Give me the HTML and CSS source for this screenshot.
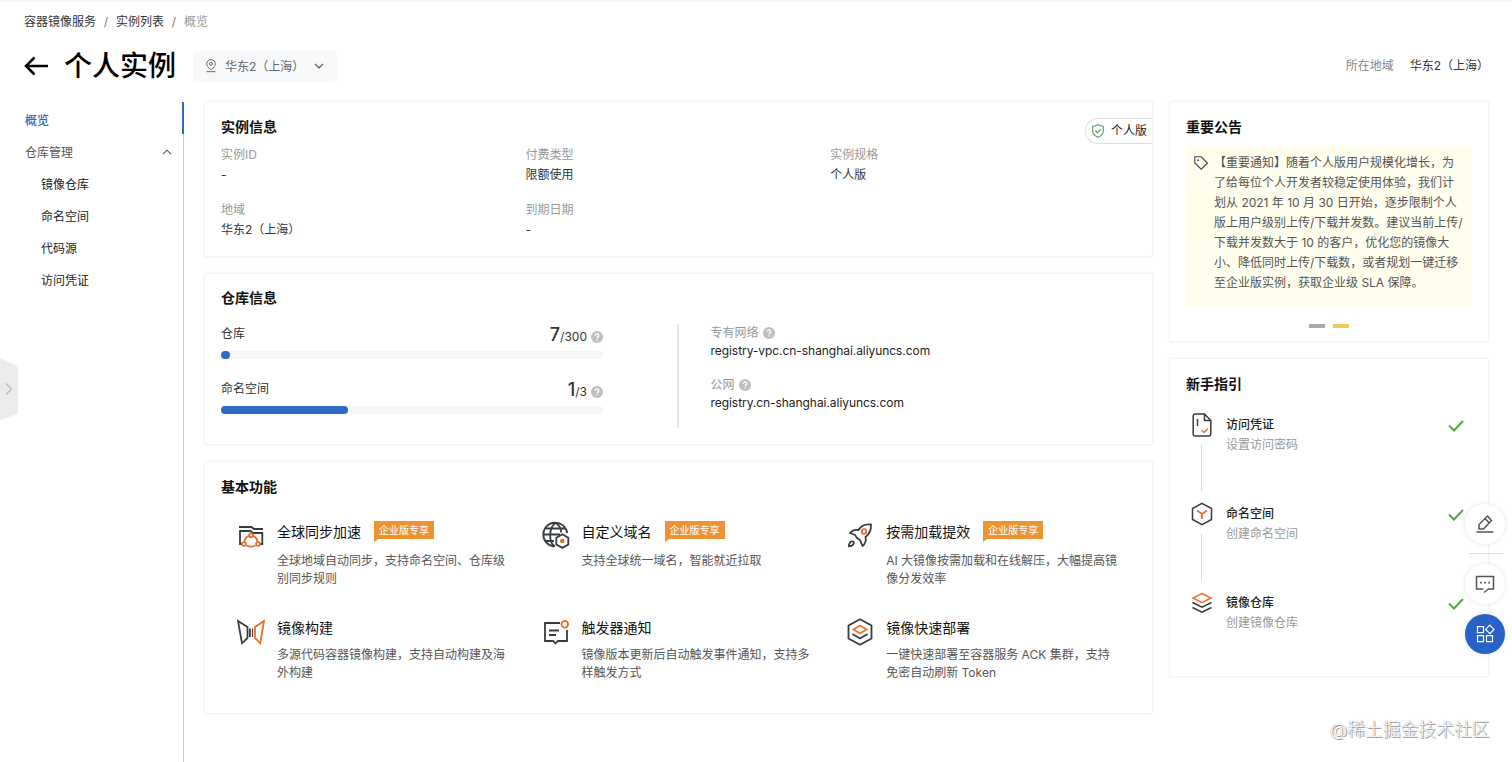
FILE: index.html
```html
<!DOCTYPE html>
<html lang="zh-CN">
<head>
<meta charset="utf-8">
<title>个人实例</title>
<link rel="stylesheet" href="styles.css">
</head>
<body>
<svg class="defs" aria-hidden="true">
  <symbol id="help" viewBox="0 0 12 12"><circle cx="6" cy="6" r="6" fill="#bfbfbf"/><path d="M4.2 4.800c0-2.400 3.700-2.300 3.700-.2C7.900 5.900 6.100 5.900 6.100 7.300M6.100 8.300v1.300" fill="none" stroke="#fff" stroke-width="1.300"/></symbol>
  <symbol id="check" viewBox="0 0 16 12"><path d="M1 5.500l5 5L15 1" fill="none" stroke="#4cab3c" stroke-width="2"/></symbol>
</svg>
<header class="header">
  <nav class="crumbs"><span>容器镜像服务</span><i>/</i><span>实例列表</span><i>/</i><span class="current">概览</span></nav>
  <div class="title-row">
    <svg class="back" viewBox="0 0 24 20" width="24" height="20"><path d="M1.500 10H24M10.500 1.500L2 10l8.500 8.500" fill="none" stroke="#000" stroke-width="2.500"/></svg>
    <h1>个人实例</h1>
    <div class="region">
      <svg viewBox="0 0 12 14" width="12" height="14" fill="none" stroke="#666"><path d="M6 10.700C3.400 8.800 1.700 7 1.700 4.900a4.300 4.300 0 0 1 8.600 0C10.300 7 8.600 8.800 6 10.700zM1.500 12.700h9"/><circle cx="6" cy="4.900" r="1.500"/></svg>
      <span>华东2（上海）</span>
      <svg class="chev" viewBox="0 0 10 6" width="10" height="6"><path d="M1 .8l4 4 4-4" fill="none" stroke="#555" stroke-width="1.200"/></svg>
    </div>
    <div class="where"><span>所在地域</span><b>华东2（上海）</b></div>
  </div>
</header>
<div class="body">
  <aside class="side">
    <a class="item active">概览</a>
    <a class="item group">仓库管理<svg viewBox="0 0 10 6" width="10" height="6"><path d="M1 5.200l4-4 4 4" fill="none" stroke="#555" stroke-width="1.100"/></svg></a>
    <a class="item sub">镜像仓库</a>
    <a class="item sub">命名空间</a>
    <a class="item sub">代码源</a>
    <a class="item sub">访问凭证</a>
  </aside>
  <main class="main">
    <section class="card info">
      <h2>实例信息</h2>
      <div class="badge"><svg viewBox="0 0 12 14" width="12" height="14" fill="none" stroke="#5a9a68" stroke-width="1.100"><path d="M6 .8c1.600 1 3.300 1.400 5.300 1.500v4.600c0 3-2.200 5-5.300 6.300C2.900 11.900.7 9.900.7 6.900V2.300C2.700 2.200 4.400 1.800 6 .8z"/><path d="M3.200 6.500l2.200 2.200 3.600-3.600"/></svg>个人版</div>
      <dl class="facts">
        <div><dt>实例ID</dt><dd>-</dd></div>
        <div><dt>付费类型</dt><dd>限额使用</dd></div>
        <div><dt>实例规格</dt><dd>个人版</dd></div>
        <div><dt>地域</dt><dd>华东2（上海）</dd></div>
        <div><dt>到期日期</dt><dd>-</dd></div>
      </dl>
    </section>
    <section class="card repo">
      <h2>仓库信息</h2>
      <div class="repo-body">
        <div class="quotas">
          <div class="quota"><div class="quota-head"><span>仓库</span><span class="count"><strong>7</strong>/300<svg class="help"><use href="#help"/></svg></span></div><div class="bar"><div class="fill" style="width:9px"></div></div></div>
          <div class="quota"><div class="quota-head"><span>命名空间</span><span class="count"><strong>1</strong>/3<svg class="help"><use href="#help"/></svg></span></div><div class="bar"><div class="fill" style="width:33.300%"></div></div></div>
        </div>
        <div class="nets">
          <div class="net"><p>专有网络<svg class="help"><use href="#help"/></svg></p><p class="host">registry-vpc.cn-shanghai.aliyuncs.com</p></div>
          <div class="net"><p>公网<svg class="help"><use href="#help"/></svg></p><p class="host">registry.cn-shanghai.aliyuncs.com</p></div>
        </div>
      </div>
    </section>
    <section class="card features">
      <h2>基本功能</h2>
      <div class="grid">
        <article class="feature">
          <svg class="folder" viewBox="0 0 28 28" width="28" height="28" fill="none" stroke="#383b40" stroke-width="1.800"><path d="M2 4h12.500l2.500 2h9M5.500 21H3V8h10.500l2.500 2h9.300v11H23"/><g stroke="#e8702a"><path d="M12 12.800C9.200 13.800 7.700 16 7.500 19M16 12.800c2.800 1 4.300 3.200 4.500 6.200M9.500 22.500c3 1.600 6 1.600 9 0"/><circle cx="14" cy="12.300" r="1.900"/><circle cx="7" cy="21" r="1.900"/><circle cx="21" cy="21" r="1.900"/></g></svg>
          <div><h3>全球同步加速<em>企业版专享</em></h3><p>全球地域自动同步，支持命名空间、仓库级<br>别同步规则</p></div>
        </article>
        <article class="feature">
          <svg viewBox="0 0 28 28" width="28" height="28" fill="none" stroke="#383b40" stroke-width="1.800"><path d="M12 25.500A12 12 0 1 1 25.200 12M13 25.500c-6.500-4-6.500-19 .5-23.500M14 2c3.500 2.500 5 6 5.200 9.500M4 7.500h20M2 13.500h16M4 20h8"/><path d="M20.300 13.300l6 3.400v6.800l-6 3.400-6-3.400v-6.800z" fill="#fff"/><circle cx="20.300" cy="20" r="2.300" fill="#e8702a" stroke="none"/></svg>
          <div><h3>自定义域名<em>企业版专享</em></h3><p>支持全球统一域名，智能就近拉取</p></div>
        </article>
        <article class="feature">
          <svg viewBox="0 0 28 28" width="28" height="28" fill="none" stroke="#383b40" stroke-width="1.800" stroke-linejoin="round"><path d="M25 3.500c-5-.5-10 1-12.500 5.500-3-.5-6 0-8.500 3l5 2c1 2.500 2.500 4 5 5l2.500 6c3-2.500 3.800-5.500 3-9C23.500 13 25.300 9 25 3.500zM7.500 20.800c1.200 1.700-.5 4.500-4.700 4.500 0-3.500 2.200-5.700 4.700-4.500z"/><circle cx="18" cy="10.500" r="2.300" stroke="#e8702a"/></svg>
          <div><h3>按需加载提效<em>企业版专享</em></h3><p>AI 大镜像按需加载和在线解压，大幅提高镜<br>像分发效率</p></div>
        </article>
        <article class="feature low">
          <svg viewBox="0 0 28 28" width="28" height="28" fill="none" stroke="#383b40" stroke-width="1.800"><path d="M1 3l9.500 6v11L5 25.300zM12.900 10.500v8.500"/><path d="M15.500 10.500v8.500" stroke-width="1.200"/><path d="M27 3l-9 6v11l5.200 5.300z" stroke="#e8702a"/></svg>
          <div><h3>镜像构建</h3><p>多源代码容器镜像构建，支持自动构建及海<br>外构建</p></div>
        </article>
        <article class="feature low">
          <svg viewBox="0 0 28 28" width="28" height="28" fill="none" stroke="#383b40" stroke-width="1.800"><path d="M18 5H3v18h8l2.500 2.300L16 23h9V12M7 12.500h10M7 17h7"/><circle cx="22.800" cy="6.300" r="3.300" stroke="#e8702a"/></svg>
          <div><h3>触发器通知</h3><p>镜像版本更新后自动触发事件通知，支持多<br>样触发方式</p></div>
        </article>
        <article class="feature low">
          <svg viewBox="0 0 28 28" width="28" height="28" fill="none" stroke="#383b40" stroke-width="1.800"><path d="M14 1.200L25.500 7.500v13L14 26.800 2.500 20.500v-13zM6.500 16l7.500 4.500 7.500-4.500"/><path d="M14 7.500l6.500 4-6.500 4-6.500-4z" stroke="#e8702a"/></svg>
          <div><h3>镜像快速部署</h3><p>一键快速部署至容器服务 ACK 集群，支持<br>免密自动刷新 Token</p></div>
        </article>
      </div>
    </section>
  </main>
  <aside class="right">
    <section class="card news">
      <h2>重要公告</h2>
      <div class="notice">
        <svg viewBox="0 0 14 14" width="14" height="14" fill="none" stroke="#444" stroke-width="1.100"><path d="M.8.8h6.400l6.200 6.200-6.200 6.200L.8 7z"/><circle cx="4.200" cy="4.200" r=".9" fill="#444" stroke="none"/></svg>
        <p>【重要通知】随着个人版用户规模化增长，为<br>了给每位个人开发者较稳定使用体验，我们计<br>划从 2021 年 10 月 30 日开始，逐步限制个人<br>版上用户级别上传/下载并发数。建议当前上传/<br>下载并发数大于 10 的客户，优化您的镜像大<br>小、降低同时上传/下载数，或者规划一键迁移<br>至企业版实例，获取企业级 SLA 保障。</p>
      </div>
      <div class="dots"><i></i><i class="on"></i></div>
    </section>
    <section class="card guide">
      <h2>新手指引</h2>
      <div class="step">
        <svg class="step-icon" viewBox="0 0 22 24" width="22" height="24" fill="none" stroke="#383b40" stroke-width="1.500"><path d="M13.500 1H4.200A2 2 0 0 0 2.200 3v18a2 2 0 0 0 2 2h13.600a2 2 0 0 0 2-2V7.500zM13.500 1v6.500h6.300M6.500 6v7"/><path d="M10.800 17.500l2.200 2 3.800-4" stroke="#e8702a"/></svg>
        <div class="step-text"><b>访问凭证</b><span>设置访问密码</span></div><svg class="ok"><use href="#check"/></svg>
      </div>
      <div class="step">
        <svg class="step-icon" viewBox="0 0 22 24" width="22" height="24" fill="none" stroke="#383b40" stroke-width="1.500"><path d="M11 1.300l9.500 5.200v11L11 22.700l-9.500-5.200v-11z"/><path d="M6 8.500l5 3.500 5-3.500M11 12v5" stroke="#e8702a" stroke-width="1.800"/></svg>
        <div class="step-text"><b>命名空间</b><span>创建命名空间</span></div><svg class="ok"><use href="#check"/></svg>
      </div>
      <div class="step">
        <svg class="step-icon" viewBox="0 0 22 24" width="22" height="24" fill="none" stroke="#383b40" stroke-width="1.500"><path d="M11 2.500l9 4.500-9 4.700L2 7z" stroke="#e8702a"/><path d="M1.500 11.500l9.500 4.700 9.500-4.700M1.500 16.500l9.500 4.700 9.500-4.700"/></svg>
        <div class="step-text"><b>镜像仓库</b><span>创建镜像仓库</span></div><svg class="ok"><use href="#check"/></svg>
      </div>
    </section>
  </aside>
</div>
<div class="handle"><svg viewBox="0 0 18 62" width="18" height="62"><path d="M0 0l15 7q3 1.500 3 4.500v41q0 3-3 4.500L0 62z" fill="#ebebeb"/><path d="M6 25.500l5.500 5.500L6 36.500" fill="none" stroke="#bbb" stroke-width="1.400"/></svg></div>
<div class="floats">
  <div class="fab"><svg viewBox="0 0 20 20" width="20" height="20" fill="none" stroke="#555" stroke-width="1.500"><path d="M4 15v-4.500L12.500 2l4 4.500L8.500 15zM10 4.500l4 4.300M1.500 18h17"/></svg></div>
  <hr>
  <div class="fab"><svg viewBox="0 0 20 20" width="20" height="20" fill="none" stroke="#555" stroke-width="1.500"><path d="M8.500 15h-7V2.500h17V15h-5L9 18.500"/><path d="M5 8.700h1.800M9.100 8.700h1.800M13.200 8.700H15" stroke-width="1.800"/></svg></div>
  <div class="fab blue"><svg viewBox="0 0 20 20" width="20" height="20" fill="none" stroke="#fff" stroke-width="1.200"><path d="M2.500 2.700h6v6h-6zM2.500 11.700h6v6h-6zM11.500 11.700h6v6h-6zM14.800 1.200l4.200 4.200-4.200 4.200-4.200-4.200z"/></svg></div>
</div>
<div class="watermark">@稀土掘金技术社区</div>
</body>
</html>
```
FILE: styles.css
```css
* { box-sizing: border-box; margin: 0; padding: 0; }
body { width: 1512px; height: 762px; overflow: hidden; position: relative; background: #fff; border-top: 2px solid #f5f5f5; font: 12px/20px Inter, "Noto Sans CJK SC", sans-serif; color: #333; }
i, em { font-style: normal; }
svg { flex: none; display: block; }
.defs { position: absolute; width: 0; height: 0; }
.header { height: 99px; padding: 10px 30px 0 24px; }
.crumbs { display: flex; }
.crumbs i { width: 20px; text-align: center; color: #777; }
.crumbs .current { color: #999; }
.title-row { display: flex; align-items: center; margin-top: 16px; height: 36px; }
h1 { font-size: 28px; line-height: 36px; font-weight: 500; color: #000; margin: 0 17px 0 16px; }
.region { display: flex; align-items: center; width: 144px; height: 31px; padding: 0 12px; background: #f7f8fa; color: #666; gap: 8px; border-radius: 2px; }
.region span { padding-top: 2px; }
.region .chev { margin-left: 2px; }
.where { margin-left: auto; display: flex; gap: 16px; color: #888; margin-right: -7px; }
.where b { font-weight: 400; color: #333; }
.body { display: flex; align-items: flex-start; height: 661px; }
.side { width: 184px; height: 660px; border-right: 1px solid #c9c9c9; padding: 3px 0 0 25px; position: relative; margin: 1px 20px 0 0; flex: none; }
.side::after { content: ""; position: absolute; right: -1px; top: 0; width: 2px; height: 32px; background: #2d6bc4; }
.item { display: flex; align-items: center; height: 32px; color: #222; }
.item.active { color: #2d6bc4; font-weight: 500; }
.item.group { color: #555; justify-content: space-between; padding-right: 11px; }
.item.group svg { margin-top: -3px; }
.item.sub { padding-left: 16px; }
.main { width: 949px; margin-right: 16px; flex: none; display: flex; flex-direction: column; gap: 16px; }
.right { width: 320px; display: flex; flex-direction: column; gap: 16px; }
.card { position: relative; border: 1px solid #f3f3f3; box-shadow: 0 0 3px rgba(0,0,0,.05); background: #fff; padding: 15px 16px; border-radius: 2px; }
h2 { font-size: 14px; line-height: 20px; font-weight: 600; color: #111; }
.info { height: 156px; }
.badge { position: absolute; right: 0; top: 16px; width: 67px; height: 26px; border: 1px solid #dedede; border-right: 0; border-radius: 13px 0 0 13px; display: flex; align-items: center; padding-left: 6px; gap: 7px; color: #222; background: #fff; }
.facts { display: grid; grid-template-columns: repeat(3, 304.600px); row-gap: 15px; margin-top: 8px; }
.facts dt { color: #999; }
.facts dd { color: #333; }
.repo { height: 172px; }
.repo h2 { margin-top: -1px; }
.repo-body { display: flex; margin-top: 16px; height: 104px; }
.quotas { width: 382px; }
.quota { height: 55px; }
.quota-head { display: flex; justify-content: space-between; height: 27px; line-height: 20px; color: #333; }
.count { display: flex; align-items: baseline; font-size: 12px; padding-top: 1px; }
.count strong { font-size: 18px; line-height: 20px; font-weight: 500; }
.help { width: 12px; height: 12px; margin-left: 4px; align-self: center; }
.count .help { align-self: flex-start; margin-top: 6px; }
.bar { height: 8px; border-radius: 4px; background: #f6f6f6; }
.fill { height: 8px; border-radius: 4px; background: #2d6bc4; }
.nets { margin-left: 74px; border-left: 2px solid #e5e5e5; padding-left: 31.500px; }
.net { height: 52px; }
.net p { display: flex; height: 18px; line-height: 18px; color: #999; }
.net p.host { color: #222; letter-spacing: -.055px; }
.features { height: 253px; }
.grid { display: grid; grid-template-columns: repeat(3, 304.600px); grid-template-rows: 96px 80px; margin-top: 25px; }
.feature { display: flex; padding-left: 16px; gap: 12px; white-space: nowrap; }
.feature > svg { margin-top: -1px; }
.feature > svg.folder { margin-top: 1px; }
.feature h3 { font-size: 14px; font-weight: 400; line-height: 20px; color: #111; display: flex; }
.feature p { line-height: 18px; margin-top: 10px; color: #555; }
.feature.low > svg { margin-top: 0; }
.feature.low p { margin-top: 8px; }
.feature em { position: relative; margin: -1px 0 1px 13px; width: 60px; height: 18px; background: #ed9332; color: #fff; font-size: 10px; line-height: 18px; text-align: center; }
.feature em::after { content: ""; position: absolute; left: 0; top: 18px; border-top: 3px solid #ed9332; border-right: 4px solid transparent; }
.news { height: 241px; }
.notice { display: flex; margin-top: 9px; height: 161px; width: 286px; padding: 7px 0 0 8px; gap: 6px; background: #fffdec; color: #555; white-space: nowrap; }
.notice > svg { margin-top: 3px; }
.dots { display: flex; justify-content: center; gap: 8px; margin-top: 17px; }
.dots i { width: 16px; height: 4px; background: #a9a9a9; }
.dots .on { background: #f3c75c; }
.guide { height: 319px; }
.step { position: relative; display: flex; height: 89px; }
.guide h2 { margin-bottom: 21px; }
.step-icon { margin: -2px 0 0 5px; }
.step-text { margin: 0 auto 0 13px; display: flex; flex-direction: column; }
.step-text b { font-weight: 500; color: #222; }
.step-text span { color: #999; }
.ok { width: 16px; height: 12px; margin: 5px 8px 0 0; }
.step:not(:last-child)::after { content: ""; position: absolute; left: 15px; top: 30px; width: 1px; height: 46px; background: #d8d8d8; }
.handle { position: absolute; left: 0; top: 356px; }
.floats { position: absolute; left: 1465px; top: 502px; width: 40px; }
.fab { width: 40px; height: 40px; border-radius: 50%; background: #fff; box-shadow: 0 0 5px rgba(0,0,0,.12); display: flex; align-items: center; justify-content: center; }
.floats hr { border: 0; height: 1px; width: 34px; margin: 9px 0 10px 4px; background: #ddd; }
.fab.blue { background: #2862c6; margin-top: 10px; }
.watermark { position: absolute; left: 1330px; top: 715px; font-size: 17.800px; line-height: 26px; font-weight: 300; color: #fff; text-shadow: 0 0 1px #888, 1px 1px 0 #999; white-space: nowrap; }
```
